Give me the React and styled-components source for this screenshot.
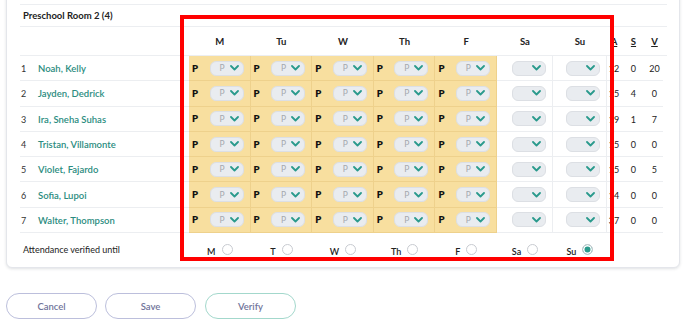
import React from "react";
import styled, { createGlobalStyle } from "styled-components";

const GlobalStyle = createGlobalStyle`
  * { box-sizing: border-box; }
  body {
    margin: 0;
    background: #fff;
    font-family: "Lato", "Open Sans", sans-serif;
    color: #222;
  }
`;

const COLS = "18px 151px repeat(5, 61.6px) 56px 54px 14px 25px 17px";

const days = ["M", "Tu", "W", "Th", "F", "Sa", "Su"];
const verifyDays = ["M", "T", "W", "Th", "F", "Sa", "Su"];

const students = [
  { name: "Noah, Kelly", a: "12", s: "0", v: "20" },
  { name: "Jayden, Dedrick", a: "15", s: "4", v: "0" },
  { name: "Ira, Sneha Suhas", a: "19", s: "1", v: "7" },
  { name: "Tristan, Villamonte", a: "15", s: "0", v: "0" },
  { name: "Violet, Fajardo", a: "15", s: "0", v: "5" },
  { name: "Sofia, Lupoi", a: "14", s: "0", v: "0" },
  { name: "Walter, Thompson", a: "37", s: "0", v: "0" },
];

const Page = styled.div`
  position: relative;
  padding: 0 6px;
`;

const Card = styled.div`
  width: 674px;
  margin-top: -6px;
  padding: 9px 12px 0 13px;
  border: 1px solid #e4e6eb;
  border-radius: 0 0 6px 6px;
  box-shadow: 0 1px 3px rgba(30, 40, 60, 0.14);
  background: #fff;
`;

const TitleRow = styled.div`
  height: 23px;
  display: flex;
  align-items: center;
  padding-left: 3px;
  border-top: 1px solid #eceef1;
  border-bottom: 1px solid #eceef1;
  font-size: 9.5px;
  font-weight: 700;
`;

const Row = styled.div`
  display: grid;
  grid-template-columns: ${COLS};
  padding-right: 4px;
  height: ${(p) => p.$h}px;
  border-bottom: ${(p) => (p.$line ? "1px solid #eceef1" : "none")};
`;

const Cell = styled.div`
  display: flex;
  align-items: center;
  justify-content: ${(p) => p.$justify || "flex-start"};
  font-size: 9px;
  font-weight: ${(p) => (p.$bold ? 700 : 400)};
  border-bottom: 1px solid #eceef1;
  padding-top: 1px;
`;

const HeadCell = styled.div`
  display: flex;
  align-items: center;
  justify-content: center;
  font-size: 9.5px;
  font-weight: 700;
  text-decoration: ${(p) => (p.$under ? "underline" : "none")};
`;

const Num = styled(Cell)`
  padding-left: 1px;
  color: #333;
`;

const Name = styled(Cell)`
  color: #2b8c80;
  font-size: 9.5px;
  font-weight: 600;
`;

const DayCell = styled.div`
  display: flex;
  align-items: center;
  justify-content: ${(p) => (p.$filled ? "space-between" : "flex-end")};
  padding: 0 6px 0 3px;
  background: ${(p) => (p.$filled ? "#f8df9f" : "#fff")};
  border-right: 1px solid ${(p) => (p.$filled ? "#eed18c" : "#eceef1")};
  border-bottom: 1px solid ${(p) => (p.$filled ? "#eed18c" : "#eceef1")};
`;

const Mark = styled.span`
  font-size: 9.5px;
  font-weight: 800;
  color: #111;
`;

const Select = styled.div`
  width: 34px;
  height: 15px;
  border-radius: 6px;
  background: #e9ecf0;
  border: 1px solid #dcdfe4;
  display: flex;
  align-items: center;
  justify-content: flex-end;
  gap: 5px;
  padding-right: 4px;
  font-size: 8.5px;
  color: #a4a8ae;
`;

const Footer = styled.div`
  display: grid;
  grid-template-columns: ${COLS};
  height: 34px;
  padding-right: 4px;
`;

const FooterLabel = styled.div`
  grid-column: 1 / span 2;
  display: flex;
  align-items: center;
  padding-left: 3px;
  padding-bottom: 2px;
  font-size: 9px;
`;

const RadioGroup = styled.div`
  display: flex;
  align-items: center;
  justify-content: center;
  gap: 6px;
  padding-bottom: 2px;
`;

const RadioLabel = styled.span`
  font-size: 9px;
  font-weight: 600;
  padding-top: 4px;
`;

const Radio = styled.span`
  width: 11px;
  height: 11px;
  border-radius: 50%;
  border: 1px solid #c8cbd1;
  background: ${(p) => (p.$checked ? "#2a9a8c" : "#fff")};
  box-shadow: ${(p) => (p.$checked ? "inset 0 0 0 1.5px #fff" : "none")};
`;

const Buttons = styled.div`
  display: flex;
  gap: 8px;
  margin-top: 25px;
`;

const Button = styled.button`
  width: 91px;
  height: 26px;
  border-radius: 13px;
  background: #fff;
  border: 1.5px solid ${(p) => (p.$accent ? "#a3d8cc" : "#bcbfdc")};
  color: #71759b;
  font-family: inherit;
  font-size: 9.5px;
  font-weight: 600;
  margin-right: ${(p) => p.$extra || 0}px;
`;

const Highlight = styled.div`
  position: absolute;
  left: 180px;
  top: 21px;
  width: 434px;
  height: 246px;
  border: 4px solid #ff0000;
  pointer-events: none;
`;

const Chevron = () => (
  <svg width="9" height="6" viewBox="0 0 9 6">
    <polyline
      points="1,1 4.5,4.5 8,1"
      fill="none"
      stroke="#2a9a8c"
      strokeWidth="1.8"
      strokeLinecap="round"
      strokeLinejoin="round"
    />
  </svg>
);

export default function App() {
  return (
    <Page>
      <GlobalStyle />
      <Card>
        <TitleRow>Preschool Room 2 (4)</TitleRow>
        <Row $h={29} $line>
          <div />
          <div />
          {days.map((d) => (
            <HeadCell key={d}>{d}</HeadCell>
          ))}
          <HeadCell $under>A</HeadCell>
          <HeadCell $under>S</HeadCell>
          <HeadCell $under>V</HeadCell>
        </Row>
        {students.map((s, i) => (
          <Row key={s.name} $h={25.3}>
            <Num>{i + 1}</Num>
            <Name>{s.name}</Name>
            {days.map((d, j) => {
              const filled = j < 5;
              return (
                <DayCell key={d} $filled={filled}>
                  {filled && <Mark>P</Mark>}
                  <Select>
                    {filled && <span>P</span>}
                    <Chevron />
                  </Select>
                </DayCell>
              );
            })}
            <Cell $justify="center">{s.a}</Cell>
            <Cell $justify="center">{s.s}</Cell>
            <Cell $justify="center">{s.v}</Cell>
          </Row>
        ))}
        <Footer>
          <FooterLabel>Attendance verified until</FooterLabel>
          {verifyDays.map((d, j) => (
            <RadioGroup key={d}>
              <RadioLabel>{d}</RadioLabel>
              <Radio $checked={j === 6} />
            </RadioGroup>
          ))}
        </Footer>
      </Card>
      <Buttons>
        <Button>Cancel</Button>
        <Button $extra={1}>Save</Button>
        <Button $accent>Verify</Button>
      </Buttons>
      <Highlight />
    </Page>
  );
}
